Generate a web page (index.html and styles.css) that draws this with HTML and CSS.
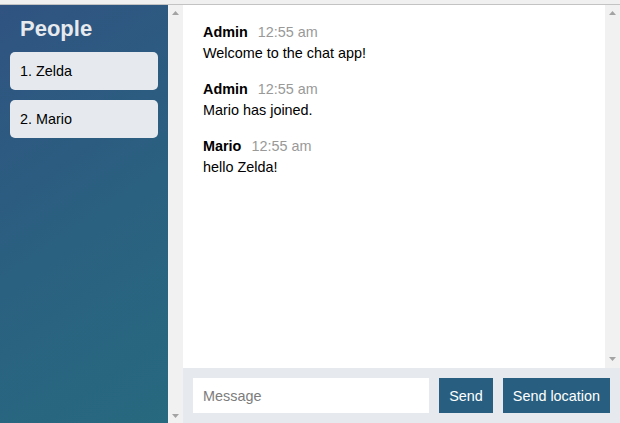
FILE: index.html
```html
<!DOCTYPE html>
<html lang="en">
<head>
<meta charset="utf-8">
<title>Chat</title>
<link rel="stylesheet" href="styles.css">
</head>
<body>
<div class="topbar"></div>
<div class="chat">
  <div class="sidebar-wrap">
    <aside class="sidebar">
      <h3 class="sidebar-title">People</h3>
      <ol class="people">
        <li class="person">1. Zelda</li>
        <li class="person">2. Mario</li>
      </ol>
    </aside>
    <div class="scrollbar scrollbar-side">
      <svg class="arrow" width="7" height="4" viewBox="0 0 7 4"><path d="M3.5 0 L7 4 L0 4 Z"/></svg>
      <svg class="arrow" width="7" height="4" viewBox="0 0 7 4"><path d="M0 0 L7 0 L3.5 4 Z"/></svg>
    </div>
  </div>
  <main class="main">
    <div class="messages-wrap">
      <div class="messages">
        <div class="message">
          <div class="message-title"><span class="message-name">Admin</span><span class="message-time">12:55 am</span></div>
          <div class="message-body">Welcome to the chat app!</div>
        </div>
        <div class="message">
          <div class="message-title"><span class="message-name">Admin</span><span class="message-time">12:55 am</span></div>
          <div class="message-body">Mario has joined.</div>
        </div>
        <div class="message">
          <div class="message-title"><span class="message-name">Mario</span><span class="message-time">12:55 am</span></div>
          <div class="message-body">hello Zelda!</div>
        </div>
      </div>
      <div class="scrollbar scrollbar-main">
        <svg class="arrow" width="7" height="4" viewBox="0 0 7 4"><path d="M3.5 0 L7 4 L0 4 Z"/></svg>
        <svg class="arrow" width="7" height="4" viewBox="0 0 7 4"><path d="M0 0 L7 0 L3.5 4 Z"/></svg>
      </div>
    </div>
    <form class="footer">
      <input class="message-input" type="text" placeholder="Message">
      <button class="btn" type="button">Send</button>
      <button class="btn" type="button">Send location</button>
    </form>
  </main>
</div>
</body>
</html>
```
FILE: styles.css
```css
* { box-sizing: border-box; }
html, body { margin: 0; padding: 0; }
body {
  font-family: "Liberation Sans", Arial, sans-serif;
  font-size: 14.4px;
  color: #000;
  background: #f0f0f0;
  overflow: hidden;
}
.topbar {
  height: 5px;
  background: #f0f0f0;
  border-bottom: 1px solid #c3c3c3;
}
.chat {
  display: flex;
  height: 418px;
}
.sidebar-wrap {
  display: flex;
  width: 183px;
  flex: none;
}
.sidebar {
  flex: 1;
  background: linear-gradient(325deg, #27697f 0%, #2a6180 45%, #305381 100%);
  padding: 11px 0 0 0;
}
.scrollbar {
  width: 15px;
  flex: none;
  background: #f1f1f1;
  display: flex;
  flex-direction: column;
  align-items: center;
  justify-content: space-between;
}
.scrollbar-side { padding: 6px 0 5px 0; }
.scrollbar-main { padding: 6px 0 7px 0; }
.arrow { display: block; fill: #a3a3a3; }
.sidebar-title {
  margin: 0 0 11px 0;
  padding-left: 20px;
  font-size: 22px;
  line-height: 25px;
  font-weight: bold;
  color: #e6eaee;
}
.people {
  list-style: none;
  margin: 0;
  padding: 0 10px;
  display: flex;
  flex-direction: column;
  gap: 10px;
}
.person {
  height: 38px;
  line-height: 38px;
  padding-left: 10px;
  background: #e6eaee;
  border-radius: 5px;
  font-size: 14.4px;
}
.main {
  flex: 1;
  display: flex;
  flex-direction: column;
  min-width: 0;
}
.messages-wrap {
  flex: 1;
  display: flex;
  min-height: 0;
}
.messages {
  flex: 1;
  background: #fff;
  padding: 19px 20px;
  display: flex;
  flex-direction: column;
  gap: 19px;
}
.message { line-height: 17px; }
.message-title {
  display: flex;
  margin-bottom: 4px;
}
.message-name {
  font-weight: bold;
  margin-right: 10px;
}
.message-time { color: #999; }
.footer {
  flex: none;
  margin: 0;
  display: flex;
  gap: 10px;
  padding: 10px;
  background: #e6eaee;
}
.message-input {
  flex: 1;
  min-width: 0;
  height: 35px;
  border: none;
  padding: 0 10px;
  font-family: inherit;
  font-size: 14.4px;
  background: #fff;
  outline: none;
}
.message-input::placeholder { color: #7c7c7c; }
.btn {
  height: 35px;
  border: none;
  padding: 0 10px;
  background: #285f80;
  color: #fff;
  font-family: inherit;
  font-size: 14.4px;
  cursor: pointer;
}
```
